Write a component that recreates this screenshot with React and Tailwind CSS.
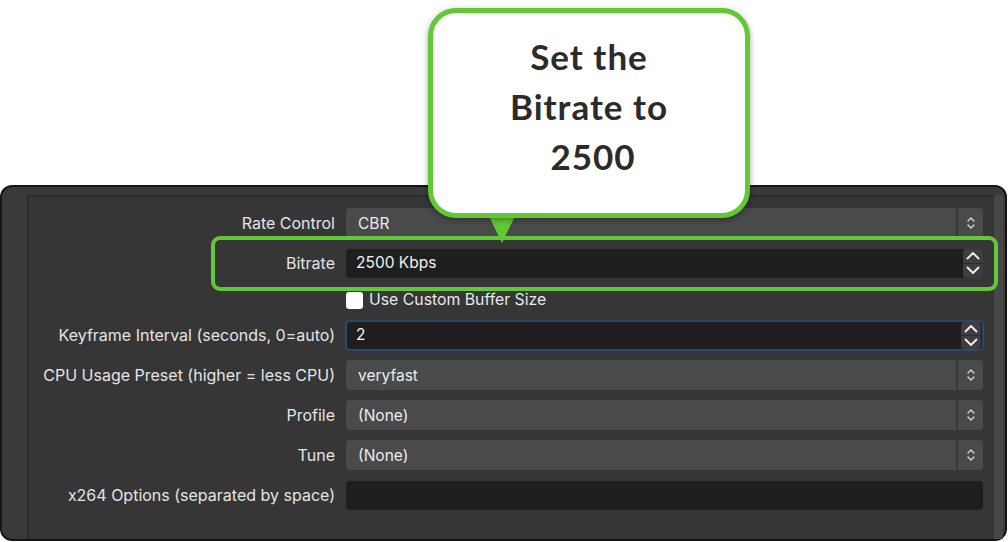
import React from "react";

const font = { fontFamily: 'Inter, "Liberation Sans", Arial, sans-serif' };

function SelectArrows() {
  return (
    <svg width="10" height="16" viewBox="0 0 10 16" fill="none" stroke="#d8d8d8" strokeWidth="1.4" strokeLinecap="round" strokeLinejoin="round">
      <path d="M2 6 L5 3 L8 6" />
      <path d="M2 10 L5 13 L8 10" />
    </svg>
  );
}

function SpinArrows() {
  return (
    <div className="flex flex-col h-full w-[20px] rounded-[4px] bg-[#3e3e3e] overflow-hidden">
      <div className="flex-1 flex items-center justify-center border-b border-[#2a2a2a]">
        <svg width="14" height="9" viewBox="0 0 14 9" fill="none" stroke="#f2f2f2" strokeWidth="1.8" strokeLinecap="round" strokeLinejoin="round">
          <path d="M1.5 7.5 L7 2 L12.5 7.5" />
        </svg>
      </div>
      <div className="flex-1 flex items-center justify-center">
        <svg width="14" height="9" viewBox="0 0 14 9" fill="none" stroke="#f2f2f2" strokeWidth="1.8" strokeLinecap="round" strokeLinejoin="round">
          <path d="M1.5 1.5 L7 7 L12.5 1.5" />
        </svg>
      </div>
    </div>
  );
}

function Label({ children }) {
  return (
    <div className="w-[306px] shrink-0 text-right text-[16px] text-[#e4e4e4] leading-none whitespace-nowrap">
      {children}
    </div>
  );
}

function SelectRow({ label, value }) {
  return (
    <div className="flex items-center h-[40px]">
      <Label>{label}</Label>
      <div className="ml-[11px] flex h-[30px] w-[637px] gap-[2px]">
        <div className="flex-1 flex items-center rounded-l-[4px] bg-[#4a4a4a] pl-[12px] pt-[1px] text-[15.5px] text-[#ececec]">
          {value}
        </div>
        <div className="w-[25px] flex items-center justify-center rounded-r-[4px] bg-[#4a4a4a]">
          <SelectArrows />
        </div>
      </div>
    </div>
  );
}

function SpinRow({ label, value, focused }) {
  return (
    <div className="flex items-center h-[40px]">
      <Label>{label}</Label>
      <div
        className={
          focused
            ? "ml-[10px] flex h-[31px] w-[639px] items-center rounded-[5px] border-2 border-[#2c4670] bg-[#1e1e1e] pl-[9px] pr-[1px]"
            : "ml-[11px] flex h-[29px] w-[637px] items-center rounded-[4px] bg-[#1e1e1e] pl-[10px] pr-0"
        }
      >
        <div className="flex-1 text-[15.5px] text-[#f2f2f2]">{value}</div>
        <div className="h-full">
          <SpinArrows />
        </div>
      </div>
    </div>
  );
}

export default function App() {
  return (
    <div className="relative w-[1008px] h-[542px] overflow-hidden bg-white" style={font}>
      {/* window */}
      <div className="mt-[185px] ml-0 w-[1007px] h-[356px] rounded-[12px] border-2 border-[#161616] bg-[#3a3a3a] flex pl-[25px] pt-[8px]">
        <div className="flex-1 border-l-2 border-t-2 border-[#2b2b2b] bg-[#363636] pt-[6px]">
          <SelectRow label="Rate Control" value="CBR" />
          <SpinRow label="Bitrate" value="2500 Kbps" />
          <div className="flex items-center h-[32px] pt-[2px]">
            <div className="w-[306px] shrink-0" />
            <div className="ml-[11px] flex items-center gap-[6px]">
              <div className="w-[17px] h-[17px] rounded-[3px] bg-white" />
              <span className="text-[15.8px] text-[#e8e8e8]">Use Custom Buffer Size</span>
            </div>
          </div>
          <SpinRow label="Keyframe Interval (seconds, 0=auto)" value="2" focused />
          <SelectRow label="CPU Usage Preset (higher = less CPU)" value="veryfast" />
          <SelectRow label="Profile" value="(None)" />
          <SelectRow label="Tune" value="(None)" />
          <div className="flex items-center h-[40px]">
            <Label>x264 Options (separated by space)</Label>
            <div className="ml-[11px] h-[29px] w-[637px] rounded-[4px] bg-[#1e1e1e]" />
          </div>
        </div>
        <div className="w-[9px] bg-[#474747] mr-[2px]" />
      </div>

      {/* green highlight around Bitrate */}
      <div className="absolute left-[211px] top-[236px] w-[787px] h-[55px] rounded-[9px] border-4 border-[#62c836]" />

      {/* callout */}
      <div className="absolute left-[428px] top-[8px] w-[322px] h-[210px]">
        <svg className="absolute left-[57px] top-[200px]" width="34" height="36" viewBox="0 0 34 36">
          <polygon points="0,0 34,0 17,35" fill="#62c836" />
        </svg>
        <div className="absolute inset-0 rounded-[28px] border-[5px] border-[#62c836] bg-white shadow-[0_2px_6px_rgba(0,0,0,0.35)] flex items-center justify-center">
          <div
            className="text-center text-[35px] leading-[50px] font-bold tracking-[1px] text-[#2b2b2b] -mt-[15px]"
            style={{ fontFamily: 'Lato, "Open Sans", sans-serif' }}
          >
            Set the
            <br />
            Bitrate to
            <br />
            <span className="pl-[8px]">2500</span>
          </div>
        </div>
      </div>
    </div>
  );
}
